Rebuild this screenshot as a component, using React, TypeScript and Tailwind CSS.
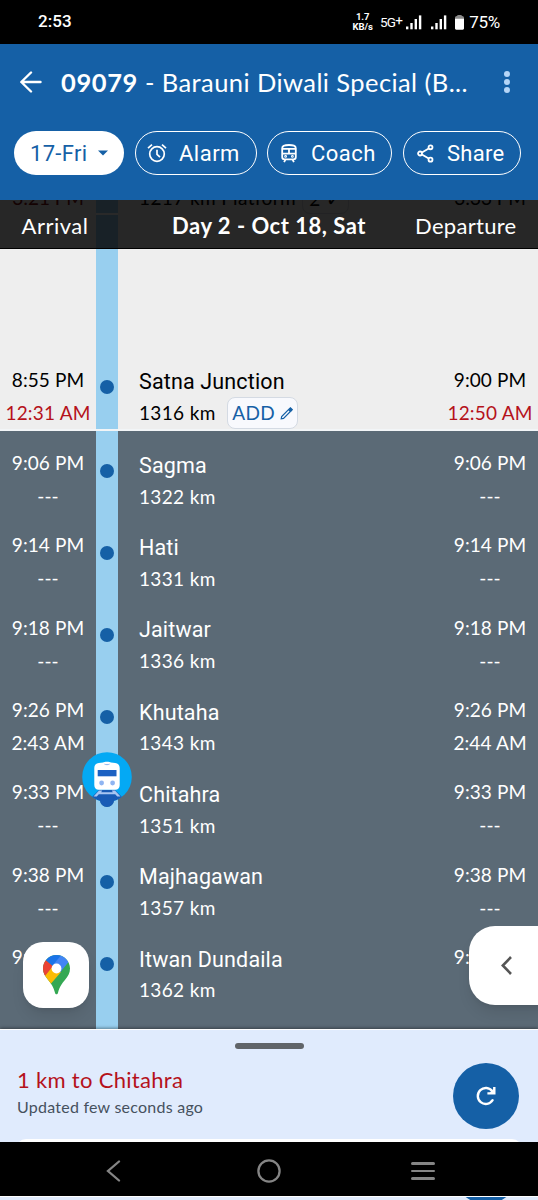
import React from "react";

interface Station {
  name: string;
  km: string;
  arrival: string;
  departure: string;
  arrivalActual: string;
  departureActual: string;
}

const upcoming: Station[] = [
  { name: "Sagma", km: "1322 km", arrival: "9:06 PM", departure: "9:06 PM", arrivalActual: "---", departureActual: "---" },
  { name: "Hati", km: "1331 km", arrival: "9:14 PM", departure: "9:14 PM", arrivalActual: "---", departureActual: "---" },
  { name: "Jaitwar", km: "1336 km", arrival: "9:18 PM", departure: "9:18 PM", arrivalActual: "---", departureActual: "---" },
  { name: "Khutaha", km: "1343 km", arrival: "9:26 PM", departure: "9:26 PM", arrivalActual: "2:43 AM", departureActual: "2:44 AM" },
  { name: "Chitahra", km: "1351 km", arrival: "9:33 PM", departure: "9:33 PM", arrivalActual: "---", departureActual: "---" },
  { name: "Majhagawan", km: "1357 km", arrival: "9:38 PM", departure: "9:38 PM", arrivalActual: "---", departureActual: "---" },
  { name: "Itwan Dundaila", km: "1362 km", arrival: "9:44 PM", departure: "9:44 PM", arrivalActual: "---", departureActual: "---" },
];

// --- Icons ---
const SignalIcon: React.FC = () => (
  <svg width="16" height="15" viewBox="0 0 16 15" fill="#fff">
    <rect x="0" y="11.5" width="2.4" height="2.8" />
    <rect x="4.3" y="8" width="2.4" height="6.3" />
    <rect x="8.6" y="4" width="2.4" height="10.3" />
    <rect x="12.9" y="0.4" width="2.4" height="13.9" />
  </svg>
);

const AlarmIcon: React.FC = () => (
  <svg width="20" height="20" viewBox="0 0 20 20" fill="none" stroke="#fff" strokeWidth="1.7">
    <circle cx="10" cy="11" r="7.3" />
    <path d="M10 6.8v4.6l3 2.8M1 5.2l4-3.6M19 5.2l-4-3.6" />
  </svg>
);

const CoachIcon: React.FC = () => (
  <svg width="16" height="19" viewBox="0 0 16 19" fill="none" stroke="#fff" strokeWidth="1.8">
    <path d="M1.2 13V4.2C1.2 1.8 4 1 8 1s6.8.8 6.8 3.2V13c0 1.4-1 2.3-2.3 2.3h-9C2.2 15.3 1.2 14.4 1.2 13z" />
    <path d="M1.2 9.6h13.6M1.2 4.8h13.6M8 4.8v4.8M4.5 15.3l-1.4 2.9M11.5 15.3l1.4 2.9" />
    <circle cx="4.6" cy="12.4" r="0.5" />
    <circle cx="11.4" cy="12.4" r="0.5" />
  </svg>
);

const ShareIcon: React.FC = () => (
  <svg width="17" height="19" viewBox="0 0 18 20" fill="none" stroke="#fff" strokeWidth="1.9">
    <circle cx="3.2" cy="10" r="2.1" />
    <circle cx="14.3" cy="3.4" r="2.1" />
    <circle cx="14.3" cy="16.5" r="2.1" />
    <path d="M5.2 8.9l7.2-4.3M5.2 11.1l7.2 4.3" />
  </svg>
);

const PencilIcon: React.FC = () => (
  <svg width="13" height="13" viewBox="0 0 14 14" fill="none" stroke="#1560a6" strokeWidth="1.3">
    <path d="M1.3 12.7l.5-2.5 7.4-7.4 2 2-7.4 7.4z" />
    <path d="M10 2.1l1.2-1.2 2 2-1.2 1.2z" fill="#1560a6" />
  </svg>
);

const TrainMarker: React.FC = () => (
  <svg width="50" height="56" viewBox="0 0 50 56">
    <defs>
      <clipPath id="marker">
        <circle cx="25" cy="25" r="24.8" />
      </clipPath>
    </defs>
    <circle cx="25" cy="25" r="24.8" fill="#04a9f4" />
    <path clipPath="url(#marker)" d="M17 38h16l8 8-9 5H18l-9-5z" fill="#195bb5" />
    <circle cx="25" cy="47.8" r="7" fill="#195bb5" />
    <path d="M17 38.5h3.2l-1 1.7h11.6l-1-1.7H33l5.500 6h-3.300l-2-2.200H16.800l-2 2.200h-3.300z" fill="#a9c6f2" />
    <path d="M12.300 16c0-3 1.700-4.600 4.500-5l4.200-.6c1.200-.9 6.800-.9 8 0l4.200.6c2.800.4 4.500 2 4.500 5v17c0 3-1.700 4.700-4.500 4.700H16.800c-2.800 0-4.500-1.700-4.500-4.700z" fill="#fff" />
    <path d="M22.500 12.200c1.400.6 3.600.6 5 0" stroke="#8bb3ee" fill="none" />
    <rect x="15.700" y="18" width="18.800" height="6.300" fill="#1c61c2" />
    <circle cx="19.600" cy="31" r="2.400" fill="#8fb5f2" />
    <circle cx="30.600" cy="31" r="2.400" fill="#8fb5f2" />
  </svg>
);

const MapPin: React.FC = () => (
  <svg width="27" height="40" viewBox="0 0 27 40">
    <defs>
      <clipPath id="pin">
        <path d="M13.500 0C21 0 27 6 27 13.400c0 4.600-2 7.600-4.700 11-3.200 4-5.600 6.600-7.300 13.300-.5 2.100-2.500 2.100-3 0-1.400-5.400-3.500-8.700-7-13C2 20.900 0 18 0 13.400 0 6 6 0 13.500 0z" />
      </clipPath>
    </defs>
    <g clipPath="url(#pin)">
      <rect width="27" height="40" fill="#34a853" />
      <path d="M0 22.500L9.500 11l8.500 6L5.500 31.500H0z" fill="#fbbc04" />
      <path d="M0 4l3 1.200L10 11 0 23.500z" fill="#ea4335" />
      <path d="M2.600 4.900L9.800 11 19.500-.5H6z" fill="#1a73e8" />
      <path d="M18.300 0L9.500 10.600l7.500 7L26 6.500V0z" fill="#4285f4" />
    </g>
    <circle cx="13.500" cy="13.500" r="4.900" fill="#fff" />
  </svg>
);

// --- Header chip ---
interface ChipProps {
  icon: React.ReactNode;
  label: string;
  className: string;
}

const Chip: React.FC<ChipProps> = ({ icon, label, className }) => (
  <button className={`flex h-11 items-center rounded-full border-[1.5px] border-white text-[22px] text-white ${className}`}>
    <span className="flex w-5 justify-center">{icon}</span>
    {label}
  </button>
);

// --- Timetable row ---
interface TimesProps {
  planned: string;
  actual: string;
  late?: boolean;
}

const Times: React.FC<TimesProps> = ({ planned, actual, late = false }) => (
  <div className="flex w-24 shrink-0 flex-col items-center pt-[18.6px] text-[19px] leading-[28px] whitespace-nowrap">
    <span className="tracking-[0.1px]">{planned}</span>
    <span className={late ? "mt-[5px] tracking-[0.2px] text-[#b5121b]" : "mt-[5px] tracking-[0.1px]"}>{actual}</span>
  </div>
);

interface RowProps {
  station: Station;
  late?: boolean;
  marker?: boolean;
  children?: React.ReactNode;
}

const StationRow: React.FC<RowProps> = ({ station, late = false, marker = false, children }) => (
  <div className="flex h-[82.3px] shrink-0">
    <Times planned={station.arrival} actual={station.arrivalActual} late={late} />
    <div className="relative w-[22px] shrink-0 bg-[#98cfef]">
      <span className="absolute top-[33px] left-1 size-[14px] rounded-full bg-[#1560a6]" />
      {marker && (
        <span className="absolute -top-[8px] -left-[14px] z-10">
          <TrainMarker />
        </span>
      )}
    </div>
    <div className="flex-1 pt-[20.3px] pl-[21px] whitespace-nowrap">
      <p className="font-[Roboto] text-[21.5px] leading-[30px] tracking-[0.15px]">{station.name}</p>
      <div className="flex h-[32px] items-center text-[19px] tracking-[0.35px]">
        <span>{station.km}</span>
        {children}
      </div>
    </div>
    <Times planned={station.departure} actual={station.departureActual} late={late} />
  </div>
);

const satna: Station = {
  name: "Satna Junction",
  km: "1316 km",
  arrival: "8:55 PM",
  departure: "9:00 PM",
  arrivalActual: "12:31 AM",
  departureActual: "12:50 AM",
};

const App: React.FC = () => {
  return (
    <div className="flex h-[1200px] w-[538px] flex-col overflow-hidden bg-[#e0ebfd] font-[Lato,sans-serif]">
      {/* Status bar */}
      <div className="flex h-11 shrink-0 items-center bg-black pr-[38px] pl-[38px] font-[Roboto] text-white">
        <span className="text-[17px] font-medium tracking-[0.1px]">2:53</span>
        <div className="ml-auto flex items-center">
          <div className="mr-[7px] text-center text-[9.5px] leading-[10px] font-bold">
            <div>1.7</div>
            <div>KB/s</div>
          </div>
          <span className="mr-[4px] text-[13.5px] tracking-[-0.7px]">
            5G<span className="relative -top-[2px]">+</span>
          </span>
          <SignalIcon />
          <span className="w-[9px]" />
          <SignalIcon />
          <svg className="mr-[5px] ml-[8px]" width="9" height="16" viewBox="0 0 10 17">
            <path d="M0 4c0-1.500.8-2 2-2.200C2.500.4 7.500.4 8 1.800c1.200.2 2 .7 2 2.200v2H0z" fill="#8a8a8a" />
            <path d="M0 5h10v10.500c0 1-.5 1.500-1.500 1.500h-7C.5 17 0 16.500 0 15.500z" fill="#fff" />
          </svg>
          <span className="pt-[1px] text-[17px] tracking-[-0.3px]">75%</span>
        </div>
      </div>

      {/* Header */}
      <header className="h-[156px] shrink-0 bg-[#1560a6] text-white">
        <div className="flex h-[76px] items-center pl-5">
          <svg width="22" height="22" viewBox="0 0 22 22" fill="none" stroke="#fff" strokeWidth="2.4" strokeLinecap="round" strokeLinejoin="round">
            <path d="M11 1.500L1.300 11l9.700 9.500M1.500 11h19" />
          </svg>
          <h1 className="ml-[19px] w-[412px] text-[25.5px] tracking-[0.42px] whitespace-nowrap">
            <b className="tracking-[0.6px]">09079</b> - Barauni Diwali Special (B...
          </h1>
          <div className="ml-[31px] flex flex-col gap-[2.7px]">
            <span className="size-[5.6px] rounded-full bg-[#b5d5f7]" />
            <span className="size-[5.6px] rounded-full bg-[#b5d5f7]" />
            <span className="size-[5.6px] rounded-full bg-[#b5d5f7]" />
          </div>
        </div>
        <div className="flex pt-[11px] pl-[14px] font-[Roboto] whitespace-nowrap">
          <button className="flex h-11 w-[110px] items-center rounded-full bg-white pl-4 text-[22px] tracking-[0.3px] text-[#1560a6]">
            17-Fri
            <svg className="ml-[11px]" width="10" height="6" viewBox="0 0 10 6" fill="#1560a6">
              <path d="M0 .5h10L5 5.500z" />
            </svg>
          </button>
          <Chip icon={<AlarmIcon />} label="Alarm" className="ml-[11px] w-[122px] gap-[12px] pl-[11px] tracking-[0.5px]" />
          <Chip icon={<CoachIcon />} label="Coach" className="ml-[10px] w-[125px] gap-[12px] pl-[11px] tracking-[0.5px]" />
          <Chip icon={<ShareIcon />} label="Share" className="ml-[11px] w-[118px] gap-[12px] pl-[11px] tracking-[0.3px]" />
        </div>
      </header>

      {/* Timetable */}
      <main className="relative flex h-[829px] shrink-0 flex-col overflow-hidden bg-[#5b6a76] text-white">
        <div className="flex h-[229px] shrink-0 flex-col overflow-hidden bg-[#eee] text-black">
          <div className="flex h-[147px] shrink-0">
            <div className="w-24 overflow-hidden text-center">
              <p className="-mt-[16px] text-[19px] leading-[28px] text-[#7a0d12]">3:21 PM</p>
            </div>
            <div className="w-[22px] bg-[#98cfef]">
              <div className="mt-[13px] h-[1.5px] bg-white" />
            </div>
            <div className="flex-1 overflow-hidden pl-[21px]">
              <div className="-mt-[16px] flex text-[19px] leading-[28px] tracking-[0.4px] whitespace-nowrap">
                1217 km Platform
                <span className="ml-[6px] rounded-lg border border-gray-300 px-[6px]">2 ✓</span>
              </div>
            </div>
            <div className="w-24 overflow-hidden text-center">
              <p className="-mt-[16px] text-[19px] leading-[28px]">3:33 PM</p>
            </div>
          </div>
          <StationRow station={satna} late>
            <button className="ml-[11.5px] flex h-[32px] w-[71px] items-center justify-center gap-[5px] rounded-lg border border-[#d4dae3] bg-[#f8f9fd] text-[19px] text-[#1560a6]">
              ADD
              <PencilIcon />
            </button>
          </StationRow>
        </div>
        <div className="flex h-[1.5px] shrink-0 bg-[#f2f5f7]" />
        {upcoming.map((station) => (
          <StationRow key={station.name} station={station} marker={station.name === "Chitahra"} />
        ))}
        <div className="ml-24 w-[22px] flex-1 bg-[#98cfef]" />

        {/* Sticky day bar */}
        <div className="absolute inset-x-0 top-0 flex h-[49px] border-b border-black bg-black/84 text-[22px] leading-[51px] whitespace-nowrap">
          <span className="w-[110px] text-center tracking-[0.5px]">Arrival</span>
          <b className="flex-1 pl-[13px] text-center tracking-[0.5px]">Day 2 - Oct 18, Sat</b>
          <span className="w-[109px] tracking-[0.3px]">Departure</span>
          <span className="w-[14px]" />
        </div>

        {/* Floating buttons */}
        <button className="absolute top-[742px] left-[23px] z-20 flex size-[66px] items-center justify-center rounded-[20px] bg-white shadow-lg">
          <MapPin />
        </button>
        <button className="absolute top-[726px] left-[469px] z-20 flex h-[79px] w-[80px] items-center rounded-l-[26px] bg-white pl-[32px] shadow-lg">
          <svg width="11" height="19" viewBox="0 0 11 19" fill="none" stroke="#555" strokeWidth="2.6">
            <path d="M10 1L1.800 9.500 10 18" />
          </svg>
        </button>
      </main>

      {/* Live status panel */}
      <section className="relative h-[113px] shrink-0 overflow-hidden border-t border-white bg-[#e0ebfd] shadow-[0_-1px_3px_rgba(0,0,0,0.4)]">
        <div className="mx-auto mt-[13px] h-[6px] w-[69px] rounded-full bg-[#606469]" />
        <div className="flex h-[90px] justify-between pr-[19px] pl-[17px]">
          <div className="pt-[15.5px] whitespace-nowrap">
            <p className="text-[22px] leading-[30px] tracking-[0.3px] text-[#b5121b]">1 km to Chitahra</p>
            <p className="text-[16px] leading-[24px] tracking-[0.24px] text-[#46515e]">Updated few seconds ago</p>
          </div>
          <button className="mt-[14px] flex size-[66px] items-center justify-center rounded-full bg-[#1560a6]">
            <svg width="20" height="20" viewBox="0 0 20 20" fill="none" stroke="#fff" strokeWidth="2.4">
              <path d="M16.600 14.200A8 8 0 1 1 16.300 5.300" strokeLinecap="round" />
              <path d="M18.300 1v6.400H11.400" />
              <path d="M18 2.500v5h-5z" fill="#fff" stroke="none" />
            </svg>
          </button>
        </div>
        <div className="mx-[16px] h-[10px] rounded-t-xl bg-white" />
      </section>

      {/* Navigation bar */}
      <nav className="flex h-[54px] shrink-0 items-center bg-black pt-[4px]">
        <svg className="ml-[106px]" width="15" height="22" viewBox="0 0 15 22" fill="none" stroke="#858585" strokeWidth="2.3" strokeLinecap="round">
          <path d="M13 1.500L2 11l11 9.500" />
        </svg>
        <svg className="ml-[136px]" width="24" height="24" viewBox="0 0 24 24" fill="none" stroke="#858585" strokeWidth="2.3">
          <circle cx="12" cy="12" r="10.6" />
        </svg>
        <div className="ml-[130px] flex w-6 flex-col gap-[5px]">
          <span className="h-[2.7px] rounded-full bg-[#858585]" />
          <span className="h-[2.7px] rounded-full bg-[#858585]" />
          <span className="h-[2.7px] rounded-full bg-[#858585]" />
        </div>
      </nav>
      <div className="relative h-1 shrink-0 overflow-hidden border-t border-white">
        <span className="absolute bottom-[-3.5px] left-[453px] size-[66px] rounded-full bg-[#1560a6]" />
      </div>
    </div>
  );
};

export default App;
